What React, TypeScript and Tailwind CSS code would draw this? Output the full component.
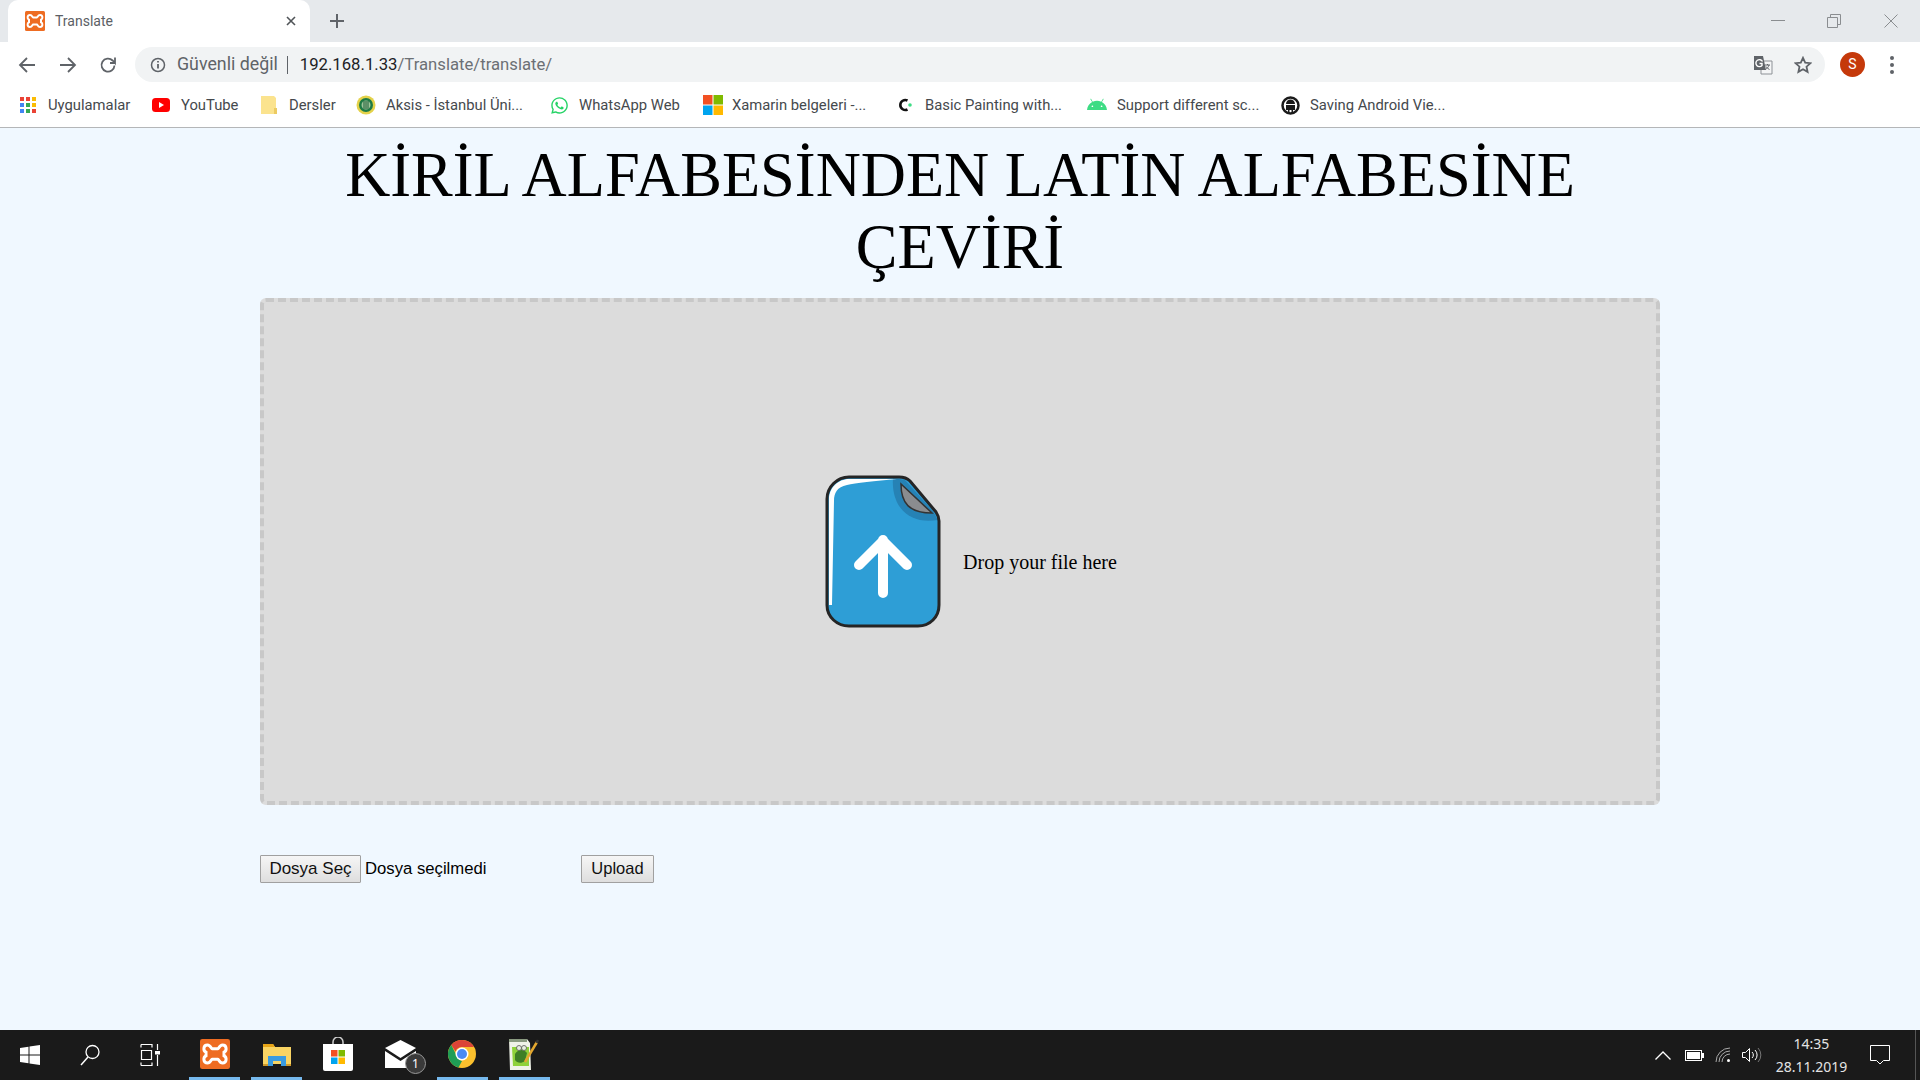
import React from "react";
import { FaWhatsapp, FaAndroid } from "react-icons/fa";

const ui = "font-['Roboto','Noto_Sans',sans-serif]";

function Xampp({ size = 20 }: { size?: number }) {
  return (
    <svg width={size} height={size} viewBox="0 0 20 20">
      <rect width="20" height="20" rx="1.500" fill="#ee6c22" />
      <path d="M5 4C7 4 7.500 6.500 8 6.500H12C12.500 6.500 13 4 15 4C18 4 18 8 16 8.800V11.200C18 12 18 16 15 16C13 16 12.500 13.500 12 13.500H8C7.500 13.500 7 16 5 16C2 16 2 12 4 11.200V8.800C2 8 2 4 5 4z" fill="none" stroke="#fff" strokeWidth="2" />
    </svg>
  );
}

function Apps() {
  const c = ["#ea4335", "#ea4335", "#fbbc05", "#4285f4", "#34a853", "#fbbc05", "#4285f4", "#34a853", "#ea4335"];
  return (
    <div className="grid grid-cols-3 gap-[2px] w-4 h-4">
      {c.map((x, i) => (
        <svg key={i} width="4" height="4"><rect width="4" height="4" fill={x} /></svg>
      ))}
    </div>
  );
}

const Bookmark = ({ w, icon, label, gap = "ml-[9px]" }: { w: string; icon: React.ReactNode; label: string; gap?: string }) => (
  <div className={`flex items-center shrink-0 h-full ${w}`}>
    <div className="w-[20px] flex justify-start shrink-0">{icon}</div>
    <span className={`${gap} text-[14.800px] text-[#45494d] whitespace-nowrap`}>{label}</span>
  </div>
);

function Youtube() {
  return (
    <svg width="18" height="14" viewBox="0 0 18 14">
      <rect width="18" height="14" rx="3.500" fill="#f00" />
      <path d="M7 4l5 3-5 3z" fill="#fff" />
    </svg>
  );
}
function Folder() {
  return (
    <svg width="16" height="20" viewBox="0 0 16 20">
      <path d="M0 1h13l2 2v16H0z" fill="#fbe38e" />
      <path d="M13 13h3v6h-3z" fill="#eccb62" />
    </svg>
  );
}
function Aksis() {
  return (
    <svg width="20" height="20" viewBox="0 0 20 20">
      <circle cx="10" cy="10" r="9.500" fill="#e4d24a" />
      <circle cx="10" cy="10" r="7" fill="#1e7a45" />
      <circle cx="10" cy="10" r="4.500" fill="#9fc59a" />
      <path d="M8 6v8M10 6v8M12 6v8" stroke="#1a5a35" strokeWidth="1" />
    </svg>
  );
}
function Ms() {
  return (
    <svg width="20" height="20" viewBox="0 0 20 20">
      <rect width="9.500" height="9.500" fill="#f25022" />
      <rect x="10.500" width="9.500" height="9.500" fill="#7fba00" />
      <rect y="10.500" width="9.500" height="9.500" fill="#00a4ef" />
      <rect x="10.500" y="10.500" width="9.500" height="9.500" fill="#ffb900" />
    </svg>
  );
}
function CLogo() {
  return (
    <svg width="16" height="16" viewBox="0 0 16 16">
      <path d="M10.500 3.500a5 5 0 1 0 0 9" fill="none" stroke="#111" strokeWidth="2.600" />
      <circle cx="13" cy="8" r="1.800" fill="#3ddc84" />
    </svg>
  );
}
function AndroidRound() {
  return (
    <svg width="19" height="19" viewBox="0 0 19 19">
      <circle cx="9.500" cy="9.500" r="8" fill="#fff" stroke="#1a1a1a" strokeWidth="2.500" />
      <path d="M5 8a4.500 4.500 0 0 1 9 0zM5 9h9v5H5zM7 14h1.500v3H7zM10.500 14H12v3h-1.500z" fill="#1a1a1a" />
    </svg>
  );
}

function Translate() {
  return (
    <svg width="20" height="20" viewBox="0 0 20 20">
      <path d="M8 6h11v13H8z" fill="#f4f5f6" stroke="#8d9196" strokeWidth="1" />
      <path d="M1 1h9l3 14H1z" fill="#5f6368" />
      <path d="M9.500 6.500A3.500 3.500 0 1 0 9 10.500V8.500H6.500" fill="none" stroke="#fff" strokeWidth="1.400" />
      <path d="M12 10h5M14.500 9v1M16 10c-.5 2-2 3.500-3.500 4.500M13 11.500c.8 1.300 2 2.400 3.500 3" fill="none" stroke="#5f6368" strokeWidth="1" />
    </svg>
  );
}

function FileIcon() {
  return (
    <svg width="116" height="153" viewBox="0 0 116 153" className="shrink-0">
      <path d="M24 2h50c5 0 8 1 11 4l26 31c2 3 3 5 3 9v84c0 12-9 21-21 21H24c-12 0-22-9-22-21V24C2 12 12 2 24 2z" fill="#2e9ed6" />
      <path d="M68 3C66 30 82 50 113 45L108 36L80 5z" fill="#2682b5" />
      <path d="M76 9C76 28 84 38 107 38z" fill="#8a8c8f" stroke="#333" strokeWidth="1.500" />
      <path d="M4 24C4 13 13 4 24 4h48C50 6 30 8 22 10 12 12 9 18 9 26L7 130 4 130z" fill="#fff" />
      <path d="M24 2h50c5 0 8 1 11 4l26 31c2 3 3 5 3 9v84c0 12-9 21-21 21H24c-12 0-22-9-22-21V24C2 12 12 2 24 2z" fill="none" stroke="#252525" strokeWidth="3" />
      <path d="M58 118V65M34 90L58 66l24 24" fill="none" stroke="#fff" strokeWidth="10" strokeLinecap="round" strokeLinejoin="round" />
    </svg>
  );
}

const Cell = ({ children, active }: { children: React.ReactNode; active?: boolean }) => (
  <div className={`relative w-[51px] h-full flex items-center justify-center shrink-0 border-b-[3px] ${active ? "border-[#76b9ed]" : "border-transparent"}`}>
    {children}
  </div>
);

function Chrome() {
  return (
    <svg width="28" height="28" viewBox="0 0 28 28">
      <circle cx="14" cy="14" r="14" fill="#fbc02d" />
      <path d="M14 0a14 14 0 0 1 12.100 7H14a7 7 0 0 0-6.500 4.500L3.300 5A14 14 0 0 1 14 0z" fill="#db4437" />
      <path d="M3.300 5l5.500 11a7 7 0 0 0 5.200 5L10.500 27.600A14 14 0 0 1 3.300 5z" fill="#1f9d55" />
      <circle cx="14" cy="14" r="6.500" fill="#fff" />
      <circle cx="14" cy="14" r="5" fill="#4a8af4" />
    </svg>
  );
}

export default function App() {
  return (
    <div className="w-[1920px] h-screen flex flex-col overflow-hidden bg-[#f0f8ff]">
      {/* Tab strip */}
      <div className={`h-[42px] shrink-0 bg-[#e6e9ec] flex items-end pl-[8px] ${ui}`}>
        <div className="w-[302px] h-[42px] bg-white rounded-t-[10px] flex items-center pl-[17px] pr-[13px] shrink-0">
          <Xampp />
          <span className="ml-[10px] text-[14px] text-[#5c6065]">Translate</span>
          <svg className="ml-auto" width="12" height="12" viewBox="0 0 12 12"><path d="M2 2l8 8M10 2l-8 8" stroke="#505458" strokeWidth="1.600" /></svg>
        </div>
        <div className="h-full flex items-center ml-[19px]">
          <svg width="16" height="16" viewBox="0 0 16 16"><path d="M8 1v14M1 8h14" stroke="#606469" strokeWidth="2" /></svg>
        </div>
        <div className="ml-auto h-full flex items-center">
          <div className="w-[56px] flex justify-center"><svg width="14" height="2"><rect width="14" height="1" fill="#8a8d90" /></svg></div>
          <div className="w-[56px] flex justify-center"><svg width="14" height="14" viewBox="0 0 14 14"><path d="M.5 3.500h10v10H.5zM3.500 3.500v-3h10v10h-3" fill="none" stroke="#8a8d90" /></svg></div>
          <div className="w-[58px] flex justify-center"><svg width="14" height="14" viewBox="0 0 14 14"><path d="M.5.500l13 13M13.500.500l-13 13" fill="none" stroke="#8a8d90" /></svg></div>
        </div>
      </div>
      {/* Toolbar */}
      <div className={`h-[44px] shrink-0 bg-white flex items-center pl-[18px] pt-[1px] ${ui}`}>
        <svg width="18" height="18" viewBox="0 0 18 18"><path d="M17 9H2M9 2L2 9l7 7" fill="none" stroke="#5f6368" strokeWidth="1.800" /></svg>
        <svg className="ml-[23px]" width="18" height="18" viewBox="0 0 18 18"><path d="M1 9h15M9 2l7 7-7 7" fill="none" stroke="#5f6368" strokeWidth="1.800" /></svg>
        <svg className="ml-[22px]" width="18" height="18" viewBox="0 0 18 18"><path d="M15.500 9.500a6.500 6.500 0 1 1-1.900-5L16 7V1.500M16 7h-5" fill="none" stroke="#5f6368" strokeWidth="1.800" /></svg>
        <div className="ml-[18px] w-[1690px] h-[35px] rounded-full bg-[#f1f3f4] flex items-center pl-[15px] pr-[13px] shrink-0">
          <svg width="16" height="16" viewBox="0 0 16 16"><circle cx="8" cy="8" r="6.500" fill="none" stroke="#5f6368" strokeWidth="1.500" /><path d="M8 7v4.500M8 4v1.600" stroke="#5f6368" strokeWidth="1.800" /></svg>
          <span className="ml-[11px] text-[17.800px] text-[#5f6368] whitespace-nowrap">Güvenli değil</span>
          <span className="ml-[9px] w-px h-[18px] bg-[#5f6368]" />
          <span className="ml-[12px] text-[16.700px] text-[#202124] whitespace-nowrap">192.168.1.33<span className="text-[#6c7075]">/Translate/translate/</span></span>
          <div className="ml-auto flex items-center gap-[21px]">
            <Translate />
            <svg width="18" height="18" viewBox="0 0 18 18"><path d="M9 1.800l2.200 4.800 5.200.6-3.900 3.500 1.100 5.200L9 13.300l-4.600 2.600 1.100-5.200L1.600 7.200l5.200-.6z" fill="none" stroke="#5f6368" strokeWidth="1.800" /></svg>
          </div>
        </div>
        <div className="ml-[15px] w-[25px] h-[25px] rounded-full bg-[#c5390b] flex items-center justify-center text-white text-[14px] shrink-0">S</div>
        <div className="ml-[25px] flex flex-col gap-[3px] shrink-0">
          <div className="w-[4px] h-[4px] rounded-full bg-[#5f6368]" />
          <div className="w-[4px] h-[4px] rounded-full bg-[#5f6368]" />
          <div className="w-[4px] h-[4px] rounded-full bg-[#5f6368]" />
        </div>
      </div>
      {/* Bookmarks */}
      <div className={`h-[42px] shrink-0 bg-white flex items-center pl-[20px] pb-[3px] border-b border-[#b4b6b8] ${ui}`}>
        <Bookmark w="w-[132px]" gap="ml-[8px]" icon={<Apps />} label="Uygulamalar" />
        <Bookmark w="w-[109px]" icon={<Youtube />} label="YouTube" />
        <Bookmark w="w-[95px]" gap="ml-[8px]" icon={<Folder />} label="Dersler" />
        <Bookmark w="w-[194px]" gap="ml-[10px]" icon={<Aksis />} label="Aksis - İstanbul Üni..." />
        <Bookmark w="w-[153px]" icon={<FaWhatsapp size={19} color="#25d366" />} label="WhatsApp Web" />
        <Bookmark w="w-[194px]" icon={<Ms />} label="Xamarin belgeleri -..." />
        <Bookmark w="w-[190px]" gap="ml-[8px]" icon={<CLogo />} label="Basic Painting with..." />
        <Bookmark w="w-[194px]" gap="ml-[10px]" icon={<FaAndroid size={21} color="#3ddc84" />} label="Support different sc..." />
        <Bookmark w="w-[190px]" icon={<AndroidRound />} label="Saving Android Vie..." />
      </div>
      {/* Page */}
      <main className="flex-1 w-[1400px] mx-auto font-['Liberation_Serif',serif] text-black">
        <h1 className="mt-[11px] mb-[15px] text-center text-[62.500px] leading-[72px] font-normal">KİRİL ALFABESİNDEN LATİN ALFABESİNE ÇEVİRİ</h1>
        <div className="h-[507px] border-[4px] border-dashed border-[#c8c8c8] rounded-[6px] bg-[#dcdcdc] flex items-center justify-center pl-[22px]">
          <FileIcon />
          <span className="ml-[22px] mt-[21px] text-[20px]">Drop your file here</span>
        </div>
        <div className="mt-[50px] flex items-center font-['Liberation_Sans',sans-serif]">
          <button className="w-[101px] h-[28px] border border-[#a0a0a0] rounded-[1px] bg-gradient-to-b from-[#f6f6f6] to-[#dedede] text-[#111] text-[17px] shrink-0">Dosya Seç</button>
          <span className="ml-[4px] w-[216px] shrink-0 text-[16.700px]">Dosya seçilmedi</span>
          <button className="w-[73px] h-[28px] border border-[#a0a0a0] rounded-[1px] bg-gradient-to-b from-[#f6f6f6] to-[#dedede] text-[#111] text-[16.500px] leading-[24px] pb-[2px] shrink-0">Upload</button>
        </div>
      </main>
      {/* Taskbar */}
      <div className="h-[50px] shrink-0 bg-[#1a1a1a] flex items-center font-['Noto_Sans',sans-serif]">
        <div className="w-[60px] flex justify-center">
          <svg width="20" height="20" viewBox="0 0 20 20"><path d="M0 3l8.500-1.200v7.700H0zM9.500 1.600L20 0v9.500H9.500zM0 10.500h8.500v7.700L0 17zM9.500 10.500H20V20L9.500 18.400z" fill="#fff" /></svg>
        </div>
        <div className="w-[60px] flex justify-center">
          <svg width="20" height="22" viewBox="0 0 20 22"><circle cx="12.500" cy="8" r="6.500" fill="none" stroke="#fff" strokeWidth="1.300" /><path d="M8 13L1 21" stroke="#fff" strokeWidth="1.500" /></svg>
        </div>
        <div className="w-[60px] flex justify-center">
          <svg width="20" height="22" viewBox="0 0 20 22"><path d="M1 .5h11v3M1 .5v3M1 21.500h11v-3M1 21.500v-3M1.500 6.500h10v9h-10zM17.500 0v6M17.500 11v11" fill="none" stroke="#fff" strokeWidth="1.200" /><rect x="15" y="7" width="5" height="3.500" fill="#fff" /></svg>
        </div>
        <div className="ml-[9px] h-full flex gap-[11px]">
          <Cell active><Xampp size={30} /></Cell>
          <Cell active>
            <svg width="28" height="24" viewBox="0 0 28 24"><path d="M0 2h10l2 3h16v17H0z" fill="#f9d463" /><path d="M0 2h10l2 3H0z" fill="#e6a417" /><path d="M5 14h18v10h-5v-5h-8v5H5z" fill="#3a9be0" /><path d="M0 22h5v2H0zM23 22h5v2h-5z" fill="#d09a2a" /></svg>
          </Cell>
          <Cell>
            <svg width="30" height="34" viewBox="0 0 30 34" className="mr-[2px]"><path d="M10 8V5a5 5 0 0 1 10 0v3" fill="none" stroke="#ccc" strokeWidth="1.500" /><path d="M0 7h30v25a2 2 0 0 1-2 2H2a2 2 0 0 1-2-2z" fill="#fff" /><rect x="8" y="13" width="6.500" height="6.500" fill="#f25022" /><rect x="15.500" y="13" width="6.500" height="6.500" fill="#7fba00" /><rect x="8" y="20.500" width="6.500" height="6.500" fill="#00a4ef" /><rect x="15.500" y="20.500" width="6.500" height="6.500" fill="#ffb900" /></svg>
          </Cell>
          <Cell>
            <svg width="31" height="28" viewBox="0 0 31 28"><path d="M0 8L15.500 0 31 8 15.500 18z" fill="#fff" /><path d="M0 11l15.500 10L31 11v17H0z" fill="#fff" /></svg>
            <div className="absolute left-[30px] top-[23px] w-[21px] h-[21px] rounded-full bg-[#3a3a3a] border border-[#999] flex items-center justify-center text-white text-[12px] leading-none">1</div>
          </Cell>
          <Cell active><span className="mr-[2px] flex"><Chrome /></span></Cell>
          <Cell active>
            <svg width="30" height="32" viewBox="0 0 30 32" className="mr-[2px]"><path d="M0 1h18l3 4 1 27H1z" fill="#f0f3e8" /><path d="M3 9h17v19H4z" fill="#8fd23a" /><path d="M0 1h18v3H0z" fill="#8a9a80" /><path d="M6 16c3-5 9-5 12-1l-2 8c-4 3-8 2-10-1z" fill="#3f7f26" /><circle cx="10" cy="10" r="2.500" fill="#e8efe0" stroke="#555" strokeWidth=".8" /><circle cx="15" cy="10" r="2.500" fill="#e8efe0" stroke="#555" strokeWidth=".8" /><path d="M16 24L28 4" stroke="#e3a72f" strokeWidth="2.500" /><path d="M27.500 4.800L29 2" stroke="#333" strokeWidth="2.500" /></svg>
          </Cell>
        </div>
        <div className="ml-auto h-full flex items-center text-white">
          <svg width="16" height="9" viewBox="0 0 16 9"><path d="M.5 8.500L8 1l7.500 7.500" fill="none" stroke="#fff" strokeWidth="1.300" /></svg>
          <svg className="ml-[14px]" width="19" height="11" viewBox="0 0 19 11"><rect x=".5" y=".5" width="16" height="10" fill="none" stroke="#fff" /><rect x="2" y="2" width="13" height="7" fill="#fff" /><rect x="17" y="3" width="2" height="5" fill="#fff" /></svg>
          <svg className="ml-[11px]" width="16" height="16" viewBox="0 0 16 16"><path d="M1 15A14 14 0 0 1 15 1M4 15A11 11 0 0 1 15 4M7 15a8 8 0 0 1 8-8" fill="none" stroke="#aaa" strokeWidth="1" /><circle cx="13.500" cy="13.500" r="1.500" fill="#fff" /></svg>
          <svg className="ml-[11px]" width="20" height="16" viewBox="0 0 20 16"><path d="M.5 5.500h3l4-4v13l-4-4h-3z" fill="none" stroke="#fff" /><path d="M10 5a4 4 0 0 1 0 6M13 3a7 7 0 0 1 0 10" fill="none" stroke="#fff" /><path d="M16 1a10 10 0 0 1 0 14" fill="none" stroke="#777" /></svg>
          <div className="ml-[13px] w-[73px] flex flex-col items-center text-[14px] leading-[23px] text-[#e4e4e4]">
            <span>14:35</span>
            <span>28.11.2019</span>
          </div>
          <div className="ml-[22px] mr-[25px]">
            <svg width="20" height="20" viewBox="0 0 20 20"><path d="M.5.500h19v15h-6L10 19l-3.500-3.500h-6z" fill="none" stroke="#fff" /></svg>
          </div>
          <div className="w-px h-full bg-[#555]" />
          <div className="w-[4px]" />
        </div>
      </div>
    </div>
  );
}
